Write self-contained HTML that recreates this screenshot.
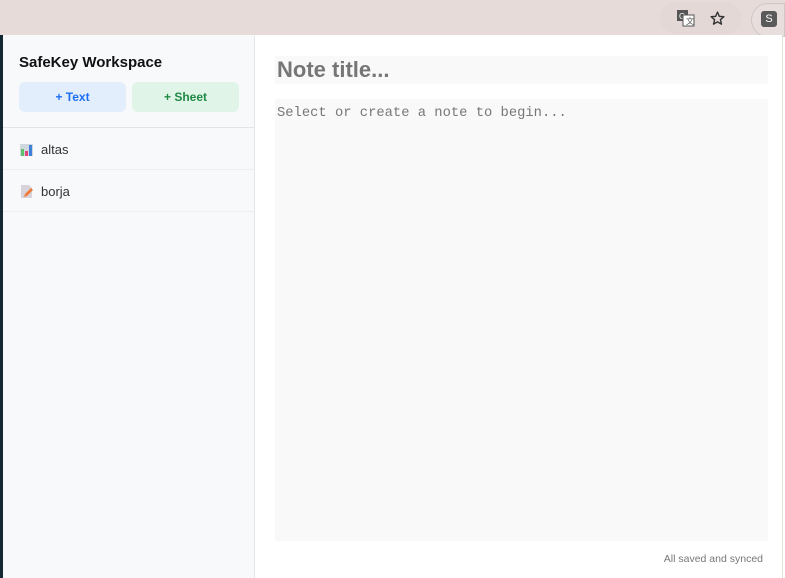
<!DOCTYPE html>
<html><head><meta charset="utf-8"><style>
*{box-sizing:border-box;margin:0;padding:0}
body{width:785px;height:578px;overflow:hidden;background:#fff;font-family:"Liberation Sans",sans-serif;position:relative}
.top{position:absolute;left:0;top:0;width:785px;height:35px;background:#e7dbda}
.pill{position:absolute;left:660px;top:2px;width:82px;height:32px;background:#e4d8d7;border-radius:16px}
.prof{position:absolute;left:751px;top:3px;width:34px;height:34px;border-radius:17px 0 0 17px;background:#e8dedd;border:1px solid #d0c6c5}
.prof span{position:absolute;left:9px;top:7px;width:16px;height:16px;background:#5a5a5a;border-radius:3px;color:#fff;font-size:11px;text-align:center;line-height:16px}
.leftstrip{position:absolute;left:0;top:35px;width:3px;height:543px;background:#142833}
.side{position:absolute;left:3px;top:35px;width:252px;height:543px;background:#f7f9fb;border-right:1px solid #e4e6e8}
.side h1{position:absolute;left:16px;top:19px;font-size:15px;font-weight:bold;color:#111}
.btn{position:absolute;top:47px;width:107px;height:30px;border-radius:6px;font-size:12px;font-weight:bold;text-align:center;line-height:30px}
.b1{left:16px;background:#e2eefc;color:#1d6ff2}
.b2{left:129px;background:#e0f4e7;color:#1f8a46}
.sep{position:absolute;left:0;width:252px;height:1px;background:#e2e4e6}
.item{position:absolute;left:17px;font-size:13px;color:#333}
.main{position:absolute;left:256px;top:35px;width:527px;height:543px;background:#fff;border-right:1px solid #dde3d6}
.title{position:absolute;left:19px;top:21px;width:493px;height:28px;background:#f9f9f9;font-size:22px;font-weight:bold;color:#767676;padding-left:2px;line-height:28px}
.ta{position:absolute;left:19px;top:64px;width:493px;height:442px;background:#f9f9f9;font-family:"Liberation Mono",monospace;font-size:13.8px;color:#777;padding:7px 2px}
.foot{position:absolute;right:19px;top:518px;font-size:10.5px;color:#777}
</style></head><body>
<div class="top"></div>
<div class="pill">
<svg style="position:absolute;left:17px;top:8px" width="18" height="17" viewBox="0 0 18 17"><rect x="0" y="0" width="11" height="11" fill="#555"/><text x="2" y="9" font-size="8" fill="#fff" font-family="Liberation Sans">G</text><rect x="6" y="5" width="11" height="11" fill="#fff" stroke="#555"/><text x="9" y="14" font-size="8" fill="#555" font-family="Liberation Sans">文</text></svg>
<svg style="position:absolute;left:49px;top:8px" width="17" height="17" viewBox="0 0 24 24"><path d="M12 3l2.6 6 6.4.5-4.9 4.2 1.5 6.3L12 16.7 6.4 20l1.5-6.3L3 9.5l6.4-.5z" fill="none" stroke="#333" stroke-width="2" stroke-linejoin="round"/></svg>
</div>
<div class="prof"><span>S</span></div>
<div class="leftstrip"></div>
<div class="side">
<h1>SafeKey Workspace</h1>
<div class="btn b1">+ Text</div><div class="btn b2">+ Sheet</div>
<div class="sep" style="top:92px"></div>
<div class="item" style="top:107px">
<svg width="13" height="13" style="vertical-align:-2px;margin-right:8px" viewBox="0 0 13 13"><rect x="0" y="1" width="13" height="12" fill="#cfd6de"/><rect x="1" y="6" width="3" height="7" fill="#5cc16b"/><rect x="5" y="8" width="3" height="5" fill="#e0457b"/><rect x="9" y="2" width="3" height="11" fill="#3f7fd9"/></svg>altas</div>
<div class="sep" style="top:134px;background:#eceef0"></div>
<div class="item" style="top:149px">
<svg width="13" height="13" style="vertical-align:-2px;margin-right:8px" viewBox="0 0 13 13"><path d="M1 0h8l3 3v10H1z" fill="#d9d4dc"/><path d="M4 12l1-3 6-6 2 2-6 6z" fill="#f07a3a"/></svg>borja</div>
<div class="sep" style="top:176px;background:#eceef0"></div>
</div>
<div class="main">
<div class="title">Note title...</div>
<div class="ta">Select or create a note to begin...</div>
<div class="foot">All saved and synced</div>
</div>
</body></html>
